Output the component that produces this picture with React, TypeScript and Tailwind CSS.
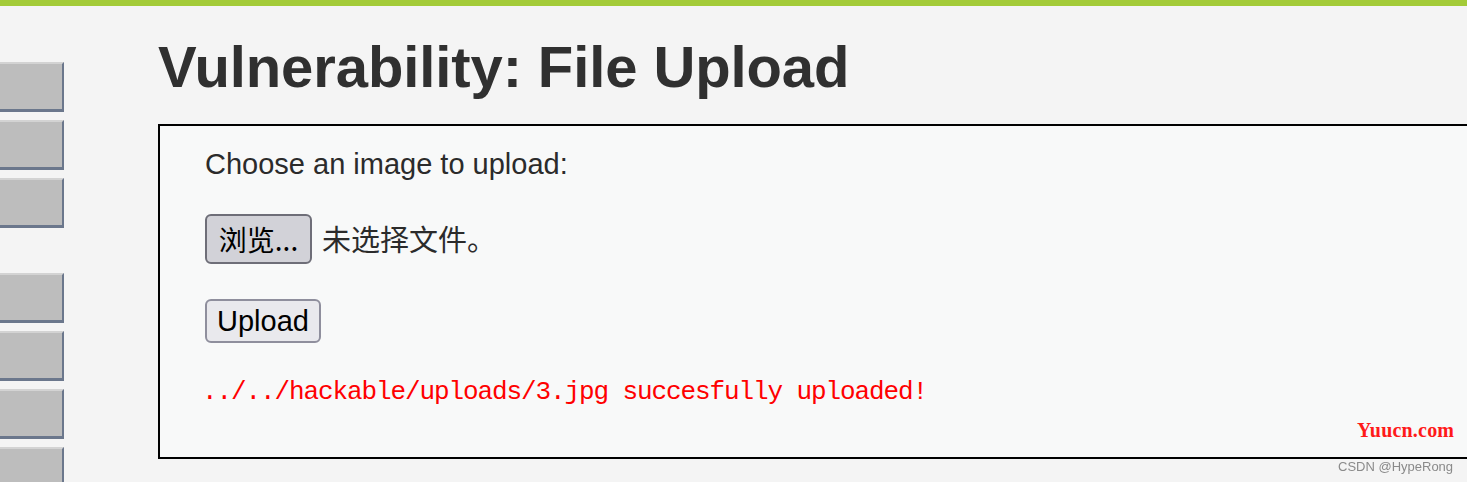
import React from "react";

const menuTop = [1, 2, 3];
const menuBottom = [4, 5, 6, 7];

function MenuButton() {
  return (
    <div className="h-[50px] w-[64px] border-t-2 border-r-2 border-b-[3px] border-t-[#d3d3d3] border-r-[#6b778c] border-b-[#6b778c] bg-[#bdbdbd]" />
  );
}

export default function App() {
  return (
    <div className="w-[1467px] h-[482px] overflow-hidden bg-[#f4f4f4] font-['Liberation_Sans',Arial,sans-serif]">
      {/* Top bar */}
      <div className="h-[6px] bg-[#a3cb38]" />

      <div className="flex">
        {/* Left menu */}
        <div className="pt-[56px] flex flex-col w-[64px] shrink-0">
          <div className="flex flex-col gap-[8px]">
            {menuTop.map((i) => (
              <MenuButton key={i} />
            ))}
          </div>
          <div className="flex flex-col gap-[8px] mt-[45px]">
            {menuBottom.map((i) => (
              <MenuButton key={i} />
            ))}
          </div>
        </div>

        {/* Main body */}
        <div className="ml-[94px] pt-[32px] shrink-0">
          <h1 className="text-[58px] leading-[58px] font-bold text-[#303030] tracking-[-0.1px]">
            Vulnerability: File Upload
          </h1>

          <div className="relative mt-[28px] w-[1340px] h-[335px] border-2 border-black bg-[#f8f9f9] pl-[45px] pt-[22px]">
            <p className="text-[29px] leading-[33px] text-[#2b2b2b]">Choose an image to upload:</p>

            <div className="mt-[33px] flex items-center">
              <button className="w-[107px] h-[50px] rounded-[6px] border-2 border-[#6e6e78] bg-[#d2d2d8] text-[28px] text-black font-['Noto_Sans_CJK_SC',sans-serif] leading-none">
                浏览...
              </button>
              <span className="ml-[10px] text-[29px] text-[#2b2b2b] font-['Noto_Sans_CJK_SC',sans-serif]">
                未选择文件。
              </span>
            </div>

            <button className="mt-[35px] block w-[116px] h-[44px] rounded-[6px] border-2 border-[#8f8f9d] bg-[#e9e9ed] text-[29px] leading-none text-black">
              Upload
            </button>

            <pre className="mt-[34px] -ml-[3px] text-[26px] leading-[30px] tracking-[-1.1px] text-[#ff0000] font-['Liberation_Mono',monospace]">
              ../../hackable/uploads/3.jpg succesfully uploaded!
            </pre>

            <span className="absolute left-[1197px] top-[289px] text-[20px] tracking-[0.2px] font-bold text-[#ff1a1a] font-['Liberation_Serif',serif]">
              Yuucn.com
            </span>
          </div>
        </div>
      </div>

      <span className="fixed left-[1338px] top-[457px] text-[13px] text-[#8a8a8a]">CSDN @HypeRong</span>
    </div>
  );
}
